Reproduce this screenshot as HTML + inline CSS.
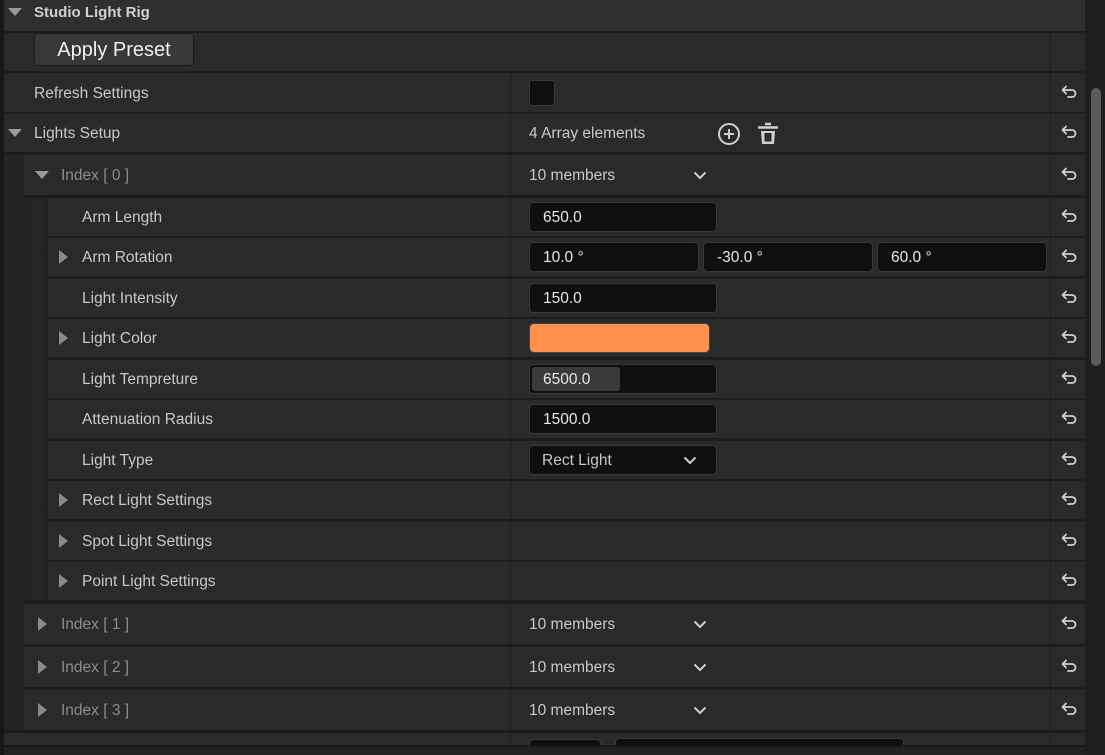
<!DOCTYPE html><html><head><style>
*{margin:0;padding:0;box-sizing:border-box}
body{width:1105px;height:755px;background:#1c1c1c;font-family:"Liberation Sans",sans-serif;font-size:15.5px;color:#c8c8c8;position:relative;overflow:hidden}
.r{position:absolute;background:#2a2a2a;right:20px}
.r .vl{position:absolute;top:0;bottom:0;width:1px;background:#1f1f1f}
.t{position:absolute;white-space:nowrap}
.tri{position:absolute;width:0;height:0}
.dn{border-left:7px solid transparent;border-right:7px solid transparent;border-top:8px solid #9a9a9a}
.rt{border-top:7px solid transparent;border-bottom:7px solid transparent;border-left:9px solid #8a8a8a}
.box{position:absolute;background:#0f0f0f;border:1px solid #383838;border-radius:4px;height:30px;color:#e8e8e8;padding-left:13px;line-height:29px}
.rs{position:absolute;left:1060px}
</style></head><body>
<div style="position:absolute;left:0;top:0;width:4px;height:755px;background:#1d1418"></div>
<div class="r" style="top:0;height:31px;left:4px;background:#2f2f2f"></div>
<div class="tri dn" style="left:8px;top:8px"></div>
<div class="t" style="left:34px;top:4px;font-weight:bold;color:#d0d0d0;font-size:15px">Studio Light Rig</div>
<div class="r" style="top:33px;height:38px;left:4px"><div class="vl" style="left:1046px"></div></div>
<div style="position:absolute;left:34px;top:33px;width:160px;height:33px;background:#383838;border:1px solid #1a1a1a;border-radius:4px;color:#f0f0f0;font-size:20px;text-align:center;line-height:32px">Apply Preset</div>

<div id="rows"></div>
<div style="position:absolute;left:1085px;top:0;width:20px;height:755px;background:#1e1e1e"></div>
<div style="position:absolute;left:1091px;top:88px;width:10px;height:278px;background:#5a5a5a;border-radius:5px"></div>
<div style="position:absolute;left:0;top:745px;width:1085px;height:10px;background:#181818"></div>
<div style="position:absolute;left:4px;top:747px;width:1081px;height:8px;background:#222"></div>
<script>
const rows=[
[73,39,4,'Refresh Settings',34,0,'chk'],
[114,38,4,'Lights Setup',34,'dn','arr'],
[155,40,24,'Index [ 0 ]',61,'dn','mem','g'],
[198,38,48,'Arm Length',82,0,['650.0',529,188]],
[238,38,48,'Arm Rotation',82,'rt','rot'],
[279,38,48,'Light Intensity',82,0,['150.0',529,188]],
[319,38,48,'Light Color',82,'rt','col'],
[360,38,48,'Light Tempreture',82,0,'temp'],
[400,38,48,'Attenuation Radius',82,0,['1500.0',529,188]],
[441,38,48,'Light Type',82,0,'type'],
[481,38,48,'Rect Light Settings',82,'rt',0],
[522,38,48,'Spot Light Settings',82,'rt',0],
[562,38,48,'Point Light Settings',82,'rt',0],
[604,40,24,'Index [ 1 ]',61,'rt','mem','g'],
[647,40,24,'Index [ 2 ]',61,'rt','mem','g'],
[690,40,24,'Index [ 3 ]',61,'rt','mem','g'],
[733,12,4,'',0,0,'part',0,1]];
const chev=(x,y)=>`<svg style="position:absolute;left:${x}px;top:${y}px" width="14" height="9"><path d="M1.5 1.5 L7 7 L12.5 1.5" stroke="#cfcfcf" stroke-width="2" fill="none"/></svg>`;
let h='';
h+=`<div style="position:absolute;left:4px;top:155px;width:20px;height:575px;background:#242424"></div>`;
h+=`<div style="position:absolute;left:24px;top:198px;width:24px;height:402px;background:linear-gradient(90deg,#232323,#262626 70%,#1e1e1e)"></div>`;
for(const [y,hh,l,name,tx,tri,v,g,norst] of rows){
 h+=`<div class="r" style="top:${y}px;height:${hh}px;left:${l}px"><div class="vl" style="left:${510-l}px"></div><div class="vl" style="left:${1050-l}px"></div></div>`;
 const cy=y+hh/2;
 if(tri=='dn')h+=`<div class="tri dn" style="left:${tx-26}px;top:${cy-4}px"></div>`;
 if(tri=='rt')h+=`<div class="tri rt" style="left:${tx-23}px;top:${cy-7}px"></div>`;
 if(name)h+=`<div class="t" style="left:${tx}px;top:${cy-8}px;${g?'color:#8c8c8c':''}">${name}</div>`;
 if(v=='chk')h+=`<div style="position:absolute;left:529px;top:${cy-13}px;width:26px;height:26px;background:#0f0f0f;border:1px solid #3a3a3a;border-radius:3px"></div>`;
 if(v=='arr'){h+=`<div class="t" style="left:529px;top:${cy-8}px">4 Array elements</div>`;
  h+=`<svg style="position:absolute;left:717px;top:${cy-11}px" width="24" height="24"><circle cx="12" cy="12" r="10" stroke="#cfcfcf" stroke-width="2" fill="none"/><path d="M12 7V17M7 12H17" stroke="#cfcfcf" stroke-width="2"/></svg>`;
  h+=`<svg style="position:absolute;left:756px;top:${cy-12}px" width="24" height="26"><path d="M9 3H15M2 6.5H22" stroke="#cfcfcf" stroke-width="2.5"/><path d="M5 10H19L18 23H6Z M8.5 12V20.5H15.5V12" fill="#cfcfcf" fill-rule="evenodd"/></svg>`;}
 if(v=='mem'){h+=`<div class="t" style="left:529px;top:${cy-8}px">10 members</div>`+chev(693,cy-4);}
 if(Array.isArray(v))h+=`<div class="box" style="left:${v[1]}px;top:${cy-15}px;width:${v[2]}px">${v[0]}</div>`;
 if(v=='rot'){[['10.0 °',529],['-30.0 °',703],['60.0 °',877]].forEach(a=>h+=`<div class="box" style="left:${a[1]}px;top:${cy-15}px;width:170px">${a[0]}</div>`);}
 if(v=='col')h+=`<div style="position:absolute;left:529px;top:${cy-15}px;width:181px;height:30px;background:#ff914d;border:1px solid #444;border-radius:5px"></div>`;
 if(v=='temp')h+=`<div class="box" style="left:529px;top:${cy-15}px;width:188px;padding:0"><div style="position:absolute;left:2px;top:2px;width:88px;height:24px;background:#3a3a3a;border-radius:3px;padding-left:11px;line-height:25px">6500.0</div></div>`;
 if(v=='type')h+=`<div class="box" style="left:529px;top:${cy-15}px;width:188px;padding-left:12px;color:#c8c8c8">Rect Light</div>`+chev(683,cy-4);
 if(v=='part'){h+=`<div style="position:absolute;left:529px;top:739px;width:72px;height:8px;background:#0f0f0f;border:1px solid #3a3a3a;border-bottom:none;border-radius:4px 4px 0 0"></div><div style="position:absolute;left:615px;top:738px;width:289px;height:9px;background:#0f0f0f;border:1px solid #3a3a3a;border-bottom:none;border-radius:4px 4px 0 0"></div>`;}
 if(!norst)h+=`<svg class="rs" style="top:${cy-9}px" width="18" height="16"><path d="M6 2.5L2.5 6L6 9.5M2.5 6H12A3.5 3.5 0 0 1 12 13H8" stroke="#cfcfcf" stroke-width="1.8" fill="none" stroke-linecap="round" stroke-linejoin="round"/></svg>`;
}
document.getElementById('rows').innerHTML=h;
</script>
</body></html>
